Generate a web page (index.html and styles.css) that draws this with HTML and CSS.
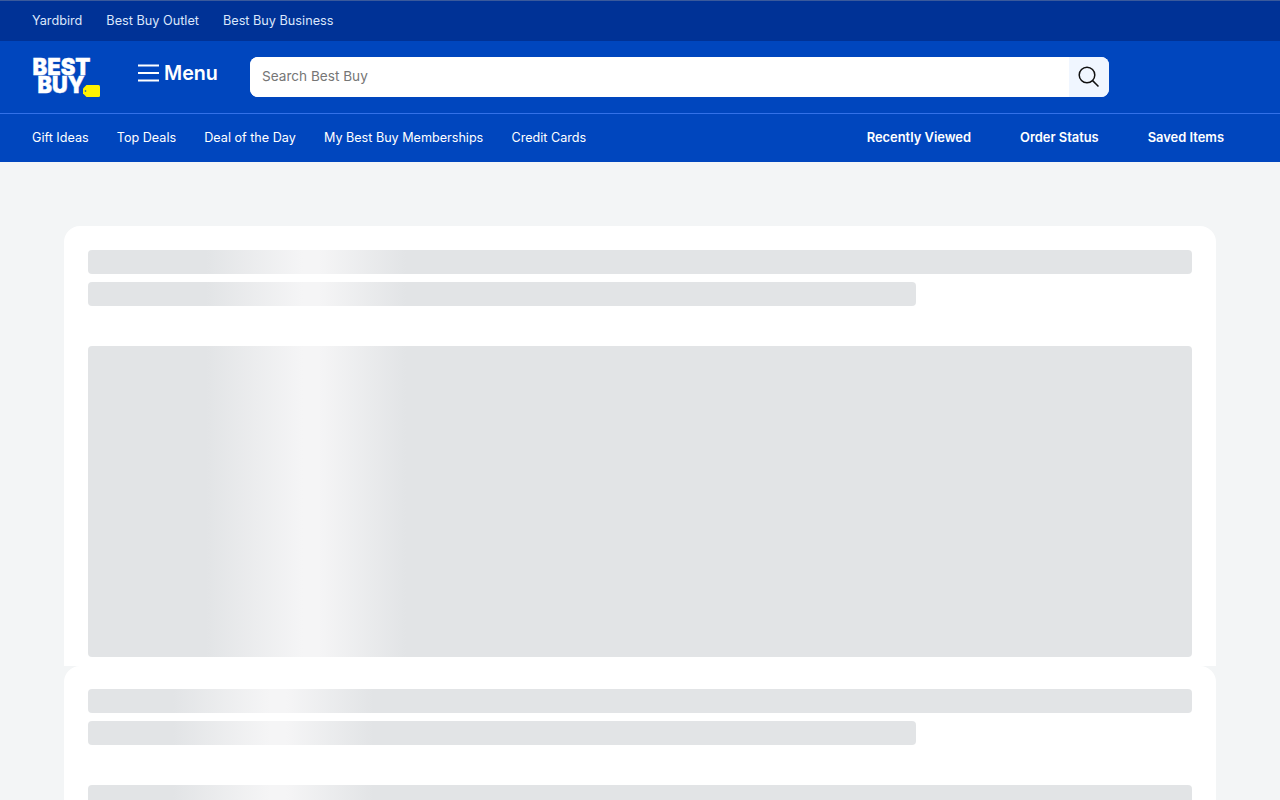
FILE: index.html
```html
<!DOCTYPE html>
<html lang="en">
<head>
    <meta charset="UTF-8">
    <meta name="viewport" content="width=device-width, initial-scale=1.0">
    <title>Best Buy</title>
    <link rel="stylesheet" href="styles.css">
</head>
<body>

    <!-- Top strip -->
    <div class="top-bar">
        <a href="#">Yardbird</a>
        <a href="#">Best Buy Outlet</a>
        <a href="#">Best Buy Business</a>
    </div>

    <!-- Logo, menu, search -->
    <header class="main-bar">
        <a href="#" class="logo">
            <svg viewBox="0 -8 68 48" width="68" height="48">
                <text class="logo-text" x="0.500" y="17" textLength="58" lengthAdjust="spacingAndGlyphs">BEST</text>
                <text class="logo-text" x="5.500" y="35" textLength="47" lengthAdjust="spacingAndGlyphs">BUY</text>
                <path d="M54.500 27H66.500a1.500 1.500 0 0 1 1.500 1.500V37.500a1.500 1.500 0 0 1-1.500 1.500H54.500L51 35.500V30.500Z" fill="#fff200"/>
                <circle cx="53.500" cy="33" r="0.800" fill="#0046be"/>
            </svg>
        </a>
        <a href="#" class="menu-link">
            <svg viewBox="0 0 21 18" width="21" height="18">
                <path d="M0 1.500H21M0 9H21M0 16.500H21" stroke="#fff" stroke-width="2" fill="none"/>
            </svg>
            <span>Menu</span>
        </a>
        <form class="search">
            <input type="text" placeholder="Search Best Buy">
            <button type="button" aria-label="Search">
                <svg viewBox="0 0 22 22" width="22" height="22">
                    <circle cx="9" cy="9" r="7.800" stroke="#111" stroke-width="1.500" fill="none"/>
                    <path d="M14.600 14.600L20.500 20.500" stroke="#111" stroke-width="1.500" fill="none"/>
                </svg>
            </button>
        </form>
    </header>

    <!-- Secondary nav -->
    <nav class="nav-bar">
        <div class="nav-left">
            <a href="#">Gift Ideas</a>
            <a href="#">Top Deals</a>
            <a href="#">Deal of the Day</a>
            <a href="#">My Best Buy Memberships</a>
            <a href="#">Credit Cards</a>
        </div>
        <div class="nav-right">
            <a href="#">Recently Viewed</a>
            <a href="#">Order Status</a>
            <a href="#">Saved Items</a>
        </div>
    </nav>

    <!-- Loading placeholders -->
    <main class="content">
        <section class="card first">
            <div class="skeleton line"></div>
            <div class="skeleton line short"></div>
            <div class="skeleton block"></div>
        </section>
        <section class="card second">
            <div class="skeleton line"></div>
            <div class="skeleton line short"></div>
            <div class="skeleton block"></div>
        </section>
    </main>

</body>
</html>
```

FILE: styles.css
```css
html,
body {
    height: 100%;
}

body {
    font-family: Inter, "Noto Sans", sans-serif;
    margin: 0;
    padding: 0;
    background: #f3f5f6;
    overflow: hidden;
}

a {
    color: #fff;
    text-decoration: none;
}

/* Top strip */
.top-bar {
    display: flex;
    align-items: center;
    gap: 24px;
    height: 38px;
    padding: 0 32px 2px;
    background: #003296;
    border-top: 1px solid #3a5a9c;
}

.top-bar a {
    font-size: 12.700px;
    color: #dbe6fb;
}

/* Logo, menu, search */
.main-bar {
    display: flex;
    align-items: center;
    height: 72px;
    padding-left: 32px;
    background: #0046be;
    border-bottom: 1px solid #3371e8;
}

.logo {
    display: block;
    width: 68px;
    height: 48px;
    margin-top: -7px;
    margin-right: 38px;
}

.logo-text {
    font-weight: 900;
    font-size: 23px;
    fill: #fff;
    stroke: #fff;
    stroke-width: 0.400px;
}

.menu-link {
    display: flex;
    align-items: center;
    gap: 5px;
    width: 112px;
    margin-top: -8px;
    font-size: 19.700px;
    font-weight: 600;
}

.search {
    display: flex;
    width: 859px;
    height: 40px;
    border-radius: 8px;
    overflow: hidden;
    background: #fff;
}

.search input {
    flex: 1;
    border: 0;
    outline: 0;
    padding: 0 12px 3px;
    font-family: inherit;
    font-size: 13.600px;
}

.search input::placeholder {
    color: #767676;
}

.search button {
    display: flex;
    align-items: center;
    justify-content: center;
    width: 40px;
    padding: 0 0 1px;
    border: 0;
    background: #f0f6ff;
}

/* Secondary nav */
.nav-bar {
    display: flex;
    align-items: center;
    justify-content: space-between;
    height: 46px;
    padding: 0 56px 2px 32px;
    background: #0046be;
}

.nav-left {
    display: flex;
    gap: 28.200px;
}

.nav-left a {
    font-size: 12.600px;
}

.nav-right {
    display: flex;
    gap: 49px;
}

.nav-right a {
    font-size: 12.900px;
    font-weight: 600;
}

/* Loading placeholders */
.content {
    padding: 64px 64px 0;
}

.card {
    padding: 24px 24px 9px;
    background: #fff;
}

.first {
    border-radius: 16px 16px 0 0;
    --peak: 223px;
}

.second {
    padding-top: 23px;
    border-radius: 16px 16px 0 0;
    --peak: 190px;
}

.skeleton {
    border-radius: 4px;
    background: linear-gradient(90deg, #e2e4e6 calc(var(--peak) - 105px), #f5f5f6 calc(var(--peak) - 8px), #f5f5f6 calc(var(--peak) + 8px), #e2e4e6 calc(var(--peak) + 95px));
}

.line {
    height: 24px;
    margin-bottom: 8px;
}

.short {
    width: 75%;
    margin-bottom: 40px;
}

.block {
    height: 311px;
}
```
